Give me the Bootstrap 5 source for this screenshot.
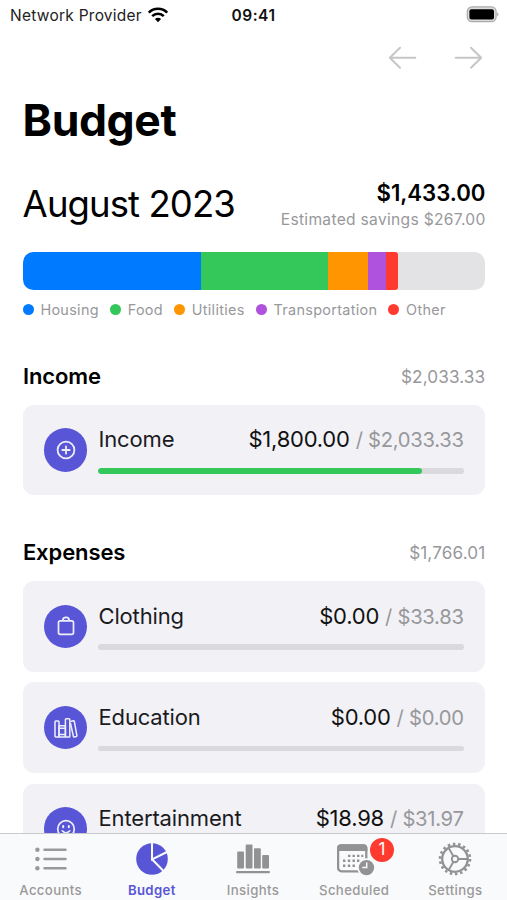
<!DOCTYPE html>
<html lang="en">
<head>
<meta charset="utf-8">
<meta name="viewport" content="width=device-width, initial-scale=1">
<title>Budget</title>
<link href="https://cdn.jsdelivr.net/npm/bootstrap@5.3.0/dist/css/bootstrap.min.css" rel="stylesheet">
<style>
body{font-family:Inter,"Liberation Sans",sans-serif;color:#000;background:#fff;height:900px;overflow:hidden;white-space:nowrap}
svg{display:block;flex:none}
.app{height:900px}
.status{height:30px;padding:0 8px 0 10px;font-size:15.5px}
.status .carrier{letter-spacing:.25px;color:#222;padding-top:1px}
.wifi{margin-left:5px}
.status .clock{font-weight:600;font-size:15.5px;letter-spacing:.5px;color:#111;padding-top:1px}
.toolbar{height:56px;padding:0 24px 0 0;gap:37px}
.page{padding:0 21.7px 0 22.6px}
.title{font-size:44.5px;font-weight:700;line-height:56px;margin:6px 0 0;letter-spacing:-.4px}
.month{font-size:36.5px;line-height:44px;letter-spacing:-.9px}
.summary{height:48px;margin-top:32px}
.total{font-size:22.2px;font-weight:600;line-height:26px;letter-spacing:-.05px;padding-top:4px}
.saving{font-size:15.6px;line-height:26px;letter-spacing:.3px;color:#98989b;padding-top:1px;margin-right:-.3px}
.split{height:38.5px;border-radius:10.5px;background:#e3e3e5;margin-top:23.6px}
.split .progress-bar:last-child{border-radius:0 3px 3px 0}
.c-blue{background:#007aff}.c-green{background:#34c759}.c-orange{background:#ff9500}.c-purple{background:#af52de}.c-red{background:#ff3b30}
.legend{height:20px;margin-top:9.5px;font-size:14.4px;color:#98989b;letter-spacing:.32px;gap:11px}
.dot{width:11px;height:11px;border-radius:50%;margin-right:6.8px}
.sec{height:30px;margin-top:41.6px}
.tile + .sec{margin-top:41.8px}
.sec h2{font-size:22px;font-weight:600;margin:0;letter-spacing:-.1px;padding-left:.3px}
.sec span{font-size:17.2px;color:#98989b;letter-spacing:.1px;padding-top:1px}
.tile{height:90.5px;border:0;border-radius:11px;background:#f1f1f6;padding:0 21.7px 0 21.4px;margin-bottom:10.9px}
.sec + .tile{margin-top:13.8px}
.disc{width:43.5px;height:43.5px;border-radius:50%;background:#5856d6;margin-right:11px}
.name{font-size:22px;line-height:28px;color:#1b1b1e;letter-spacing:-.15px}
.amt{font-size:22px;line-height:28px;color:#111;letter-spacing:-.22px}
.lim{font-size:20.2px;color:#98989b;letter-spacing:-.27px}
.meter{height:5.5px;border-radius:3px;background:#d9d9de;margin-top:13.8px;margin-bottom:1.2px}
.meter .progress-bar{border-radius:3px}
.tabs{height:67px;background:#f9fafb;border-top:1.5px solid #c9cacd;padding:0}
.tab{width:101.2px;color:#999;font-size:13.2px;font-weight:500;letter-spacing:.35px}
.tab.on{color:#5856d6;font-weight:600}
.ico{height:46.6px;padding-top:3px}
.lbl{line-height:18px}
.count{left:66.5px;top:3.6px;width:24px;height:24px;font-size:17px;font-weight:400;background:#ff3b30;color:#fff;letter-spacing:0}
</style>
</head>
<body>
<div class="app position-relative overflow-hidden">
  <header class="status d-flex align-items-center position-relative">
    <span class="carrier">Network Provider</span>
    <svg class="wifi" width="22" height="16" viewBox="0 0 22 16" fill="none" stroke="#000" stroke-width="2.6"><path d="M1.8 5.6a13 13 0 0 1 18.4 0M5.2 9.2a8.2 8.2 0 0 1 11.6 0"/><path d="M11 15.2 7.9 12a4.4 4.4 0 0 1 6.2 0z" fill="#000" stroke="none"/></svg>
    <span class="clock position-absolute start-50 translate-middle-x">09:41</span>
    <svg class="ms-auto" width="33" height="18" viewBox="0 0 33 18"><rect x="1.3" y=".9" width="28.8" height="14.8" rx="4.6" fill="#dcdcdc" stroke="#aaa" stroke-width="1.2"/><rect x="3.4" y="3.2" width="24.6" height="10.2" rx="2" fill="#000"/><path d="M31.3 6.2q2.2 2 0 4.2z" fill="#999"/></svg>
  </header>
  <div class="toolbar d-flex justify-content-end align-items-center">
    <svg width="29" height="24" viewBox="0 0 29 24" fill="none" stroke="#c6c6c8" stroke-width="2" stroke-linecap="round" stroke-linejoin="round"><path d="M27.3 11.7H1.8M12 1.7l-10.2 10 10.2 10"/></svg>
    <svg width="29" height="24" viewBox="0 0 29 24" fill="none" stroke="#c6c6c8" stroke-width="2" stroke-linecap="round" stroke-linejoin="round"><path d="M1.7 11.7h25.5M17 1.7l10.2 10-10.2 10"/></svg>
  </div>
  <main class="page">
    <h1 class="title">Budget</h1>
    <div class="summary d-flex justify-content-between align-items-center">
      <div class="month">August 2023</div>
      <div class="text-end"><div class="total">$1,433.00</div><div class="saving">Estimated savings $267.00</div></div>
    </div>
    <div class="split progress">
      <div class="progress-bar c-blue" style="width:38.5%"></div><div class="progress-bar c-green" style="width:27.5%"></div><div class="progress-bar c-orange" style="width:8.7%"></div><div class="progress-bar c-purple" style="width:3.8%"></div><div class="progress-bar c-red" style="width:2.7%"></div>
    </div>
    <div class="legend d-flex align-items-center">
      <span class="d-flex align-items-center"><i class="dot c-blue"></i>Housing</span>
      <span class="d-flex align-items-center"><i class="dot c-green"></i>Food</span>
      <span class="d-flex align-items-center"><i class="dot c-orange"></i>Utilities</span>
      <span class="d-flex align-items-center"><i class="dot c-purple"></i>Transportation</span>
      <span class="d-flex align-items-center"><i class="dot c-red"></i>Other</span>
    </div>

    <div class="sec d-flex justify-content-between align-items-center"><h2>Income</h2><span>$2,033.33</span></div>
    <div class="tile card flex-row align-items-center">
      <div class="disc d-flex align-items-center justify-content-center flex-shrink-0"><svg width="20" height="20" viewBox="0 0 20 20" fill="none" stroke="#eeeefa" stroke-width="1.8" stroke-linecap="round"><circle cx="10" cy="10" r="8.4"/><path d="M10 6.3v7.4M6.3 10h7.4"/></svg></div>
      <div class="flex-grow-1"><div class="d-flex justify-content-between"><span class="name">Income</span><span class="amt">$1,800.00 <span class="lim">/ $2,033.33</span></span></div>
      <div class="meter progress"><div class="progress-bar c-green" style="width:88.5%"></div></div></div>
    </div>

    <div class="sec d-flex justify-content-between align-items-center"><h2>Expenses</h2><span>$1,766.01</span></div>
    <div class="tile card flex-row align-items-center">
      <div class="disc d-flex align-items-center justify-content-center flex-shrink-0"><svg width="18" height="20" viewBox="0 0 18 20" fill="none" stroke="#eeeefa" stroke-width="1.7" stroke-linejoin="round"><rect x="1.5" y="4.8" width="15" height="13.6" rx="1.8"/><path d="M5.8 4.6a3.2 3.2 0 0 1 6.4 0"/></svg></div>
      <div class="flex-grow-1"><div class="d-flex justify-content-between"><span class="name">Clothing</span><span class="amt">$0.00 <span class="lim">/ $33.83</span></span></div>
      <div class="meter progress"></div></div>
    </div>
    <div class="tile card flex-row align-items-center">
      <div class="disc d-flex align-items-center justify-content-center flex-shrink-0"><svg width="24" height="22" viewBox="0 0 24 22" fill="none" stroke="#eeeefa" stroke-width="1.5" stroke-linejoin="round"><rect x="1" y="4" width="4" height="16" rx=".8"/><rect x="5" y="8.7" width="6.4" height="11.3" rx=".8"/><path d="M5 11.3h6.4M5 17.5h6.4"/><rect x="11.4" y="1.8" width="4.4" height="18.2" rx=".8"/><path d="m16.4 4.5 3.1-.7q.7-.1.8.6l2.6 14.2q.1.7-.6.9l-2 .4q-.8.1-.9-.6L16.4 6"/></svg></div>
      <div class="flex-grow-1"><div class="d-flex justify-content-between"><span class="name">Education</span><span class="amt">$0.00 <span class="lim">/ $0.00</span></span></div>
      <div class="meter progress"></div></div>
    </div>
    <div class="tile card flex-row align-items-center">
      <div class="disc d-flex align-items-center justify-content-center flex-shrink-0"><svg width="20" height="20" viewBox="0 0 20 20" fill="none" stroke="#eeeefa" stroke-width="1.7" stroke-linecap="round"><circle cx="10" cy="10" r="8.3"/><path d="M6.2 11.8q3.8 4.2 7.6 0"/><path d="M7.2 7v1.2M12.8 7v1.2" stroke-width="2"/></svg></div>
      <div class="flex-grow-1"><div class="d-flex justify-content-between"><span class="name">Entertainment</span><span class="amt">$18.98 <span class="lim">/ $31.97</span></span></div>
      <div class="meter progress"><div class="progress-bar c-green" style="width:59.4%"></div></div></div>
    </div>
  </main>

  <nav class="tabs nav flex-nowrap position-absolute bottom-0 start-0 end-0">
    <div class="tab text-center"><div class="ico d-flex align-items-center justify-content-center"><svg width="32" height="24" viewBox="0 0 32 24" stroke="#999" stroke-width="2.5" stroke-linecap="round" fill="#999"><path d="M9.5 2.7h21M9.5 12h21M9.5 21.3h21"/><g stroke="none"><circle cx="2.4" cy="2.7" r="2.2"/><circle cx="2.4" cy="12" r="2.2"/><circle cx="2.4" cy="21.3" r="2.2"/></g></svg></div><div class="lbl">Accounts</div></div>
    <div class="tab on text-center"><div class="ico d-flex align-items-center justify-content-center"><svg width="32" height="32" viewBox="0 0 32 32"><circle cx="16" cy="16" r="15.8" fill="#5856d6"/><path d="M16 0v16.3L31 9M16 16.3 27.5 28" fill="none" stroke="#f9fafb" stroke-width="2"/></svg></div><div class="lbl">Budget</div></div>
    <div class="tab text-center"><div class="ico d-flex align-items-center justify-content-center"><svg width="34" height="30" viewBox="0 0 34 30" fill="#919294"><rect x="1.2" y="7.5" width="6.8" height="17" rx="1"/><rect x="9.7" y=".6" width="6.8" height="23.9" rx="1"/><rect x="18" y="4.3" width="6.8" height="20.2" rx="1"/><rect x="26.2" y="11" width="6.8" height="13.5" rx="1"/><rect x="0" y="27" width="34" height="2.3" rx="1"/></svg></div><div class="lbl">Insights</div></div>
    <div class="tab text-center"><div class="ico d-flex align-items-center justify-content-center position-relative ps-1"><svg width="38" height="34" viewBox="1 -1 38 34"><rect x="2.1" y="2.3" width="28.2" height="26" rx="3.5" fill="none" stroke="#929294" stroke-width="2.3"/><path d="M1 8V5q0-3.8 3.8-3.8h22.8q3.8 0 3.8 3.8v3z" fill="#929294"/><g fill="#929294"><path d="M12 11.7h2.4v2.4H12zM16.5 11.7h2.4v2.4h-2.4zM21 11.7h2.4v2.4H21zM25.3 11.7h2v2.4h-2zM7 16.6h2.4V19H7zM11.8 16.6h2.4V19h-2.4zM16.5 16.6h2.4V19h-2.4zM21 16.6h2.4V19H21zM7 21.5h2.4v2.4H7zM11.8 21.5h2.4v2.4h-2.4zM16.5 21.5h2.4v2.4h-2.4z"/></g><circle cx="30.5" cy="24.6" r="9.3" fill="#f9fafb"/><circle cx="30.5" cy="24.6" r="7.7" fill="#929294"/><path d="M30.7 19.6v5h-4.4" fill="none" stroke="#f9fafb" stroke-width="1.5"/></svg><span class="count badge rounded-pill position-absolute d-flex align-items-center justify-content-center p-0">1</span></div><div class="lbl">Scheduled</div></div>
    <div class="tab text-center"><div class="ico d-flex align-items-center justify-content-center"><svg width="34" height="34" viewBox="-17 -17 34 34" fill="none" stroke="#929294"><circle r="12.8" stroke-width="2.3"/><circle r="15" stroke-width="2.6" stroke-dasharray="2.5 2.736"/><circle r="3.2" stroke-width="1.9"/><path d="M3.2 0h9.4M-1.6-2.8l-4.7-8.1M-1.6 2.8l-4.7 8.1" stroke-width="1.9"/></svg></div><div class="lbl">Settings</div></div>
  </nav>
</div>
<script src="https://cdn.jsdelivr.net/npm/bootstrap@5.3.0/dist/js/bootstrap.bundle.min.js"></script>
</body>
</html>
